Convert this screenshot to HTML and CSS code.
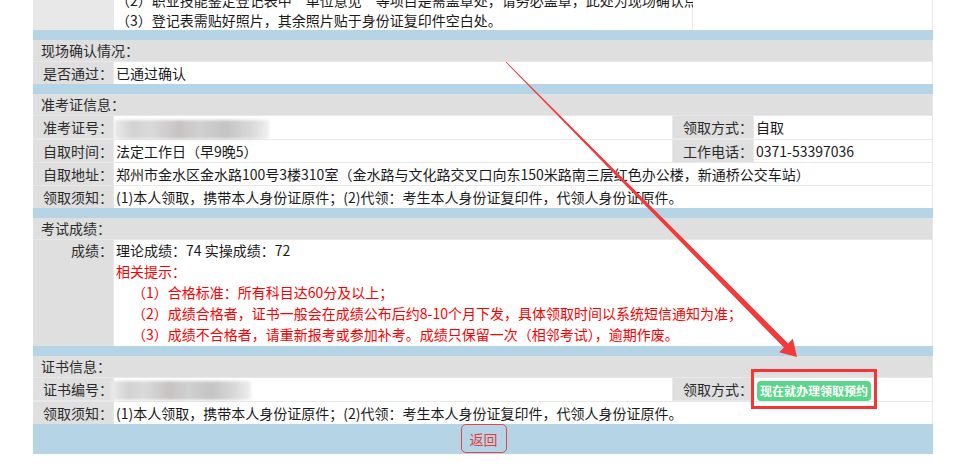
FILE: index.html
```
<!DOCTYPE html>
<html lang="zh-CN">
<head>
    <meta charset="UTF-8">
    <title>考生信息查询</title>
    <link rel="stylesheet" href="styles.css">
</head>
<body>
    <div class="page">
        <div class="block top">
            <div class="lbl"></div>
            <div class="val notes">
                <p>（1）报名时需提交身份证复印件两份，近期免冠一寸照片四张；</p>
                <p>（2）职业技能鉴定登记表中“单位意见”等项目是需盖章处，请务必盖章，此处为现场确认点盖，</p>
                <p>（3）登记表需贴好照片，其余照片贴于身份证复印件空白处。</p>
            </div>
            <div class="val"></div>
        </div>
        <div class="bar"></div>

        <div class="block">
            <div class="head">现场确认情况：</div>
            <div class="lbl">是否通过：</div>
            <div class="val wide">已通过确认</div>
        </div>
        <div class="bar"></div>

        <div class="block">
            <div class="head">准考证信息：</div>
            <div class="lbl">准考证号：</div>
            <div class="val"><span class="blur"></span></div>
            <div class="lbl">领取方式：</div>
            <div class="val">自取</div>
            <div class="lbl">自取时间：</div>
            <div class="val">法定工作日（早9晚5）</div>
            <div class="lbl">工作电话：</div>
            <div class="val">0371-53397036</div>
            <div class="lbl">自取地址：</div>
            <div class="val wide">郑州市金水区金水路100号3楼310室（金水路与文化路交叉口向东150米路南三层红色办公楼，新通桥公交车站）</div>
            <div class="lbl">领取须知：</div>
            <div class="val wide">(1)本人领取，携带本人身份证原件；(2)代领：考生本人身份证复印件，代领人身份证原件。</div>
        </div>
        <div class="bar"></div>

        <div class="block">
            <div class="head">考试成绩：</div>
            <div class="lbl tall">成绩：</div>
            <div class="val wide score">
                <p>理论成绩：74 实操成绩：72</p>
                <p class="hint">相关提示：</p>
                <p class="hint indent">（1）合格标准：所有科目达60分及以上；</p>
                <p class="hint indent">（2）成绩合格者，证书一般会在成绩公布后约8-10个月下发，具体领取时间以系统短信通知为准；</p>
                <p class="hint indent">（3）成绩不合格者，请重新报考或参加补考。成绩只保留一次（相邻考试），逾期作废。</p>
            </div>
        </div>
        <div class="bar"></div>

        <div class="block">
            <div class="head">证书信息：</div>
            <div class="lbl">证书编号：</div>
            <div class="val"><span class="blur cert"></span></div>
            <div class="lbl">领取方式：</div>
            <div class="val"><a class="book-btn" href="#">现在就办理领取预约</a></div>
            <div class="lbl">领取须知：</div>
            <div class="val wide">(1)本人领取，携带本人身份证原件；(2)代领：考生本人身份证复印件，代领人身份证原件。</div>
        </div>
        <div class="foot">
            <button class="back-btn" type="button">返回</button>
        </div>
    </div>
    <div class="rule"></div>

    <!-- annotation drawn over the page -->
    <svg class="mark" width="969" height="474" viewBox="0 0 969 474">
        <polygon fill="#f23a3a" points="505.7,62.3 783.9,347.6 779.2,352.2 797,357 792.8,338.8 788.1,343.4 506.3,61.7"/>
        <rect x="752.5" y="370.5" width="123" height="37" fill="none" stroke="#f33535" stroke-width="3"/>
    </svg>
</body>
</html>
```
FILE: styles.css
```
body {
    margin: 0;
    padding: 0;
    font-family: "Noto Sans CJK SC", "Microsoft YaHei", sans-serif;
    font-size: 14px;
    color: #1a1a1a;
    background-color: #fff;
    overflow: hidden;
    position: relative;
    height: 474px;
}
p {
    margin: 0;
}
.page {
    width: 900px;
    margin: -30px 0 0 33px;
}
.block {
    display: grid;
    grid-template-columns: 80px 558px 80px 1fr;
    gap: 1px;
    background-color: #e8e8e8;
    border-right: 1px solid #e8e8e8;
}
.block.top {
    grid-template-columns: 80px 578px 1fr;
}
.head {
    grid-column: 1 / -1;
    height: 21px;
    line-height: 21px;
    padding-left: 8px;
    background-color: #dfdfdf;
    color: #2b2b2b;
}
.lbl {
    height: 22px;
    line-height: 22px;
    text-align: right;
    background-color: #dfdfdf;
    color: #2b2b2b;
    white-space: nowrap;
}
.val {
    min-height: 22px;
    line-height: 22px;
    padding-left: 2px;
    background-color: #fff;
    white-space: nowrap;
}
.wide {
    grid-column: 2 / -1;
}
.notes {
    line-height: 20px;
}
.notes p {
    height: 20px;
}
.lbl.tall {
    height: auto;
    line-height: 21px;
}
.score {
    line-height: 21px;
    padding-bottom: 1px;
}
.hint {
    color: #f00;
}
.indent {
    padding-left: 16px;
}
.bar {
    height: 10px;
    background-color: #b5d5e6;
}
.foot {
    height: 30px;
    background-color: #b5d5e6;
    display: flex;
    justify-content: center;
    align-items: center;
}
.back-btn {
    width: 46px;
    height: 29px;
    margin-left: 1px;
    padding: 0;
    border: 1px solid #e64545;
    border-radius: 5px;
    background: transparent;
    color: #e83a3a;
    font-family: inherit;
    font-size: 14px;
}
.book-btn {
    display: inline-block;
    height: 20px;
    line-height: 20px;
    margin-left: 1px;
    padding: 0 3px;
    border-radius: 4px;
    background-color: #5ad68a;
    color: #fff;
    font-size: 12px;
    font-weight: bold;
    text-decoration: none;
    vertical-align: middle;
}
.blur {
    display: inline-block;
    width: 155px;
    height: 19px;
    margin-left: -2px;
    vertical-align: middle;
    background: linear-gradient(90deg, #ececec 0%, #d2d2d2 12%, #dadada 24%, #c6c2c2 42%, #d0d0d0 55%, #c4c4c4 72%, #d8d8d8 88%, #f0f0f0 100%);
    filter: blur(1.5px);
}
.blur.cert {
    width: 140px;
    margin-left: -5px;
}
.rule {
    height: 1px;
    margin-top: 21px;
    background-color: #e3e3e3;
}
.mark {
    position: absolute;
    top: 0;
    left: 0;
    pointer-events: none;
}
```
